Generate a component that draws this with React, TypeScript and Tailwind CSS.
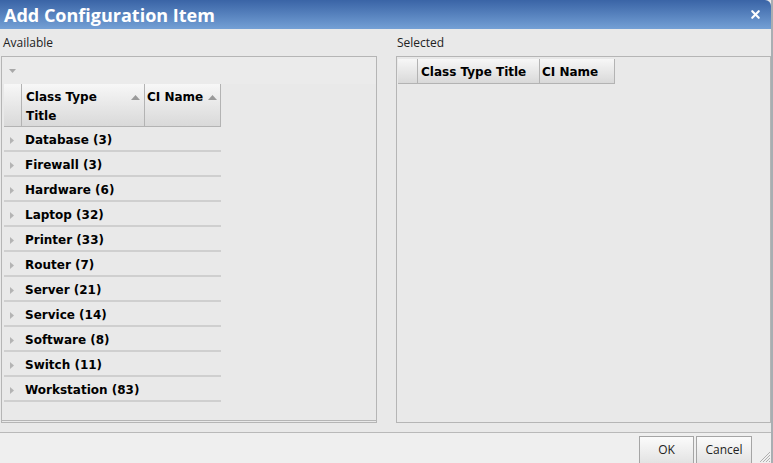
import { X } from 'lucide-react'

const groups = [
  'Database (3)',
  'Firewall (3)',
  'Hardware (6)',
  'Laptop (32)',
  'Printer (33)',
  'Router (7)',
  'Server (21)',
  'Service (14)',
  'Software (8)',
  'Switch (11)',
  'Workstation (83)',
]

const ui = "font-['Open_Sans',sans-serif]"
const grid = "font-['DejaVu_Sans',sans-serif] font-bold text-[12px] text-black"

const SortUp = () => (
  <svg width="9" height="5" viewBox="0 0 9 5" className="shrink-0">
    <path d="M0 5 L4.5 0 L9 5 Z" fill="#9a9a9a" />
  </svg>
)

const Caret = () => (
  <svg width="4" height="7" viewBox="0 0 4 7" className="shrink-0">
    <path d="M0 0 L4 3.5 L0 7 Z" fill="#b4b4b4" />
  </svg>
)

const HeaderCell = ({ className, children }: { className: string; children?: React.ReactNode }) => (
  <div
    className={`border-r border-[#b3b3b3] bg-gradient-to-b from-[#f7f7f7] to-[#d9d9d9] ${className}`}
  >
    {children}
  </div>
)

const App = () => {
  return (
    <div className="flex h-[463px] w-[773px] overflow-hidden bg-[#e9e9e9]">
      <div className="flex w-[771px] flex-col">
        {/* title bar */}
        <div className="flex h-[29px] shrink-0 items-center justify-between rounded-tr-[6px] bg-gradient-to-b from-[#3a64a6] to-[#74a0d5] pl-[4px] pr-[9px]">
          <span className={`${ui} text-[18px] font-bold leading-none text-white`}>Add Configuration Item</span>
          <X size={13} strokeWidth={4} className="text-white" />
        </div>

        {/* body */}
        <div className="flex flex-1 gap-[19px] bg-[#e9e9e9] pb-[9px]">
          {/* available */}
          <div className="flex w-[377px] flex-col">
            <div className={`${ui} h-[27px] pl-[3px] pt-[6px] text-[12px] leading-[16px] text-[#222]`}>Available</div>
            <div className="ml-[1px] flex flex-1 flex-col border border-[#b5b5b5]">
              <div className="flex h-[27px] items-center bg-[#ebebeb] pl-[7px]">
                <svg width="7" height="4" viewBox="0 0 7 4">
                  <path d="M0 0 L7 0 L3.5 4 Z" fill="#a8a8a8" />
                </svg>
              </div>
              <div className="flex flex-1 flex-col border-b border-[#b5b5b5] pl-[2px]">
                <div className="flex h-[43px] w-[217px] border-b border-[#b3b3b3]">
                  <HeaderCell className="w-[18px]" />
                  <HeaderCell className="flex w-[123px] justify-between pl-[4px] pr-[4px] pt-[4px]">
                    <span className={`${grid} leading-[19px]`}>
                      Class Type
                      <br />
                      Title
                    </span>
                    <span className="pt-[7px]">
                      <SortUp />
                    </span>
                  </HeaderCell>
                  <HeaderCell className="flex w-[76px] justify-between pl-[2px] pr-[3px] pt-[4px]">
                    <span className={`${grid} leading-[19px]`}>CI Name</span>
                    <span className="pt-[7px]">
                      <SortUp />
                    </span>
                  </HeaderCell>
                </div>
                {groups.map((g) => (
                  <div
                    key={g}
                    className="flex h-[25px] w-[217px] items-center border-b-2 border-[#cfcfcf] pt-[3px]"
                  >
                    <span className="w-[21px] pl-[6px]">
                      <Caret />
                    </span>
                    <span className={`${grid} leading-none`}>{g}</span>
                  </div>
                ))}
              </div>
              <div className="h-[1px]" />
            </div>
          </div>

          {/* selected */}
          <div className="flex flex-1 flex-col">
            <div className={`${ui} h-[27px] pl-[1px] pt-[6px] text-[12px] leading-[16px] text-[#222]`}>Selected</div>
            <div className="flex flex-1 flex-col border border-[#b5b5b5] pl-[1px] pt-[2px]">
              <div className="flex h-[25px] w-[217px] border-b border-[#b3b3b3]">
                <HeaderCell className="w-[20px]" />
                <HeaderCell className="flex w-[122px] items-center pl-[3px] pt-[2px]">
                  <span className={`${grid} leading-none`}>Class Type Title</span>
                </HeaderCell>
                <HeaderCell className="flex w-[75px] items-center pl-[2px] pt-[2px]">
                  <span className={`${grid} leading-none`}>CI Name</span>
                </HeaderCell>
              </div>
            </div>
          </div>
        </div>

        {/* footer */}
        <div className="flex h-[31px] shrink-0 items-start justify-end border-t border-[#b9b9b9] bg-[#efefef] pt-[3px]">
          <div className="flex gap-[2px]">
            <button
              className={`${ui} h-[28px] w-[55px] border border-[#a5a5a5] bg-gradient-to-b from-[#fbfbfb] to-[#e3e3e3] text-[12px] text-[#222]`}
            >
              OK
            </button>
            <button
              className={`${ui} h-[28px] w-[56px] border border-[#a5a5a5] bg-gradient-to-b from-[#fbfbfb] to-[#e3e3e3] text-[12px] text-[#222]`}
            >
              Cancel
            </button>
          </div>
          <div className="flex h-full w-[19px] items-end justify-end">
            <svg width="14" height="14" viewBox="0 0 14 14">
              <path d="M13 3 L3 13 M13 6 L6 13 M13 9 L9 13 M13 12 L12 13" stroke="#b0b0b0" strokeWidth="1" />
            </svg>
          </div>
        </div>
      </div>
      <div className="w-[2px] bg-[#a9aeb2]" />
    </div>
  )
}

export default App
